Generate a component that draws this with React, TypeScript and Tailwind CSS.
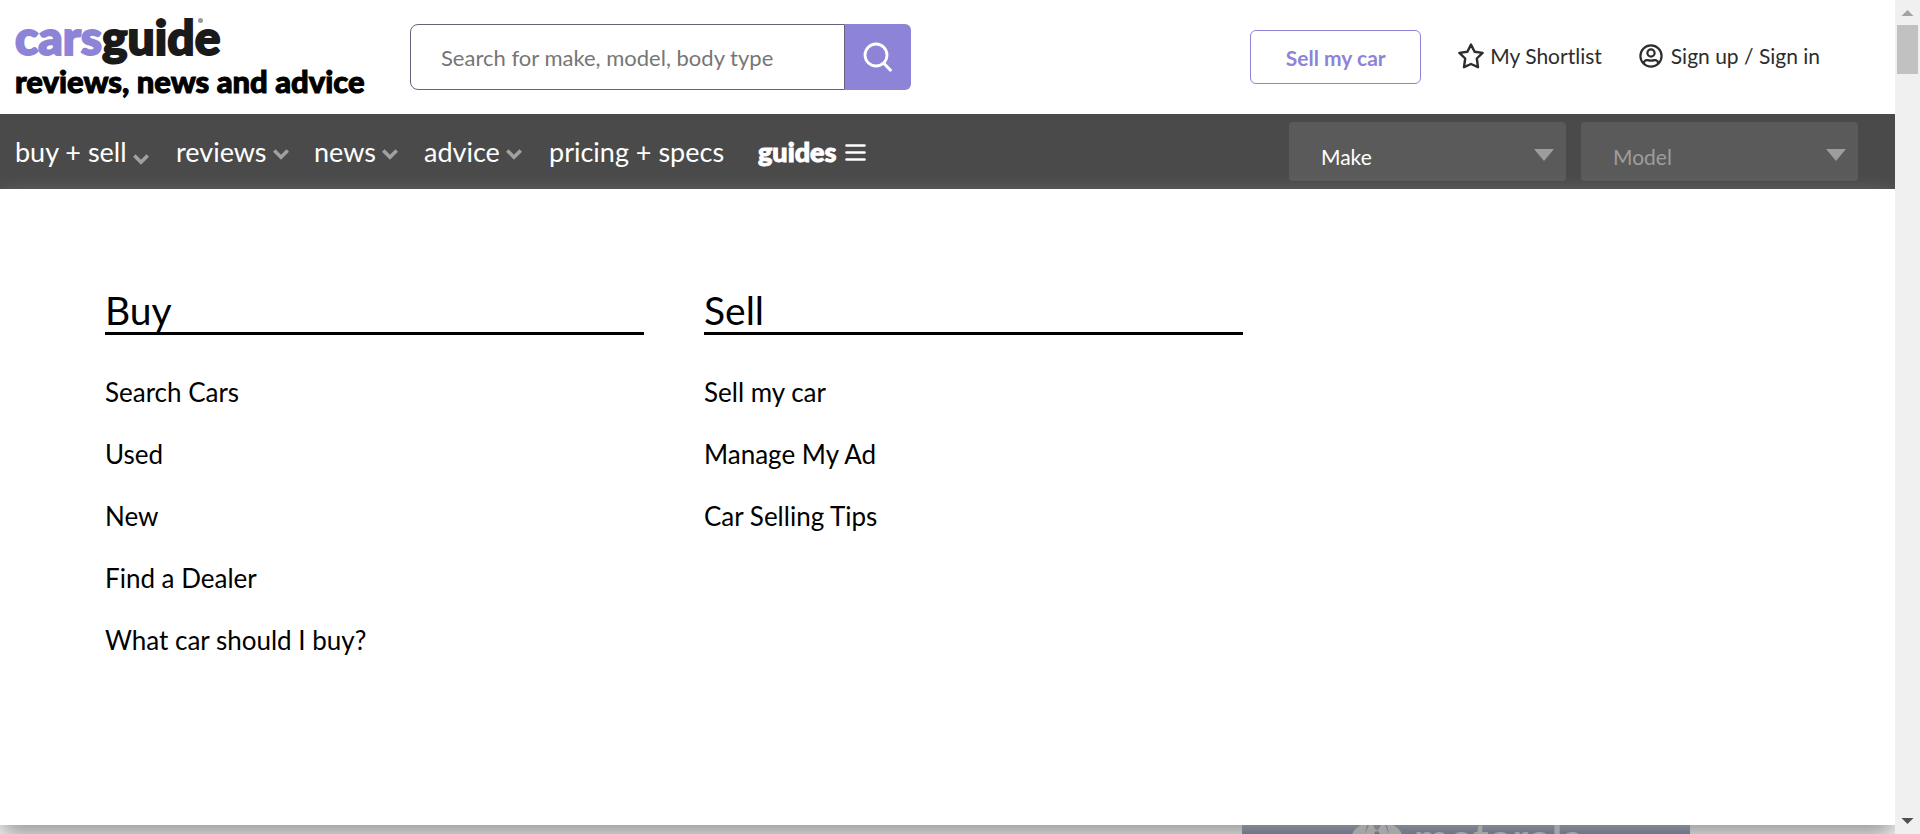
import React from "react";

const menuColumns = [
  {
    title: "Buy",
    links: ["Search Cars", "Used", "New", "Find a Dealer", "What car should I buy?"],
  },
  { title: "Sell", links: ["Sell my car", "Manage My Ad", "Car Selling Tips"] },
];

function Chevron() {
  return (
    <svg viewBox="0 0 16 11" className="h-[11px] w-4" fill="none" stroke="#a0a0a0" strokeWidth="3.6" aria-hidden="true">
      <path d="M1.3 1.5 8 8.2l6.7-6.7" />
    </svg>
  );
}

function Logo() {
  return (
    <a href="#" className="flex w-[395px] shrink-0 flex-col pt-2 pl-[15px]">
      <span className="flex text-[48px] leading-[58px] font-black text-[#1a1a1a] [-webkit-text-stroke:2px]">
        <span className="text-[#8d84d8]">cars</span>guide
        <span className="mt-[10px] -ml-[22px] size-[5px] rounded-full bg-[#9a9a9a]" />
      </span>
      <span className="text-[31px] leading-[30px] font-black whitespace-nowrap text-black [-webkit-text-stroke:1px]">
        reviews, news and advice
      </span>
    </a>
  );
}

function SearchForm() {
  return (
    <form className="mt-6 flex h-[66px] w-[501px] shrink-0" onSubmit={(e) => e.preventDefault()}>
      <input
        type="text"
        aria-label="Search"
        placeholder="Search for make, model, body type"
        className="min-w-0 flex-1 rounded-l-[8px] border border-[#66627a] pl-[30px] text-[22px] text-[#333] outline-none placeholder:text-[#767676]"
      />
      <button type="submit" aria-label="Search" className="flex w-[66px] items-center justify-center rounded-r-[6px] bg-[#8d84d8]">
        <svg viewBox="0 0 30 30" className="size-[30px]" fill="none" stroke="#fff" strokeWidth="2.8" aria-hidden="true">
          <circle cx="13" cy="13" r="11" />
          <path d="m20.5 21 7.8 8" strokeWidth="3" />
        </svg>
      </button>
    </form>
  );
}

function Header() {
  return (
    <header className="flex h-[114px] items-start bg-white pr-[75px]">
      <Logo />
      <div className="mr-6 ml-[15px]">
        <SearchForm />
      </div>
      <div className="ml-auto flex items-start text-[21px] whitespace-nowrap text-[#2d2d2d]">
        <a
          href="#"
          className="mt-[30px] mr-[37px] flex h-[54px] w-[171px] items-center justify-center rounded-[6px] border border-[#8d84d8] pt-[2px] font-bold text-[#8d84d8]"
        >
          Sell my car
        </a>
        <a href="#" className="mt-10 mr-[37px] flex h-8 items-center gap-[6px]">
          <svg viewBox="0 0 26 26" className="size-[26px]" fill="none" stroke="#2d2d2d" strokeWidth="2.4" strokeLinejoin="round" aria-hidden="true">
            <path d="m13 1.600 3.600 7.200 8 1.100-5.800 5.600 1.200 8.700-7-3.200-7 3.200 1.200-8.700-5.800-5.600 8-1.100z" />
          </svg>
          My Shortlist
        </a>
        <a href="#" className="mt-10 flex h-8 items-center gap-2">
          <svg viewBox="0 0 24 24" className="size-6" fill="none" stroke="#2d2d2d" strokeWidth="2.200" aria-hidden="true">
            <circle cx="12" cy="12" r="10.6" />
            <circle cx="12" cy="9" r="3.6" />
            <path d="M4.5 19c1-2.600 2.600-3.200 4-2.900 2.300.700 4.700.700 7 0 1.400-.300 3 .300 4 2.900" />
          </svg>
          Sign up / Sign in
        </a>
      </div>
    </header>
  );
}

function NavSelect({ label, disabled = false }: { label: string; disabled?: boolean }) {
  return (
    <div className="grid h-[59px] w-[277px] grid-cols-1">
      <select
        aria-label={label}
        disabled={disabled}
        className="col-start-1 row-start-1 appearance-none rounded-[4px] bg-[#5a5a5a] pt-[11px] pl-8 text-[21px] text-white opacity-100 disabled:text-[#9d9d9d]"
      >
        <option>{label}</option>
      </select>
      <svg
        viewBox="0 0 20 12"
        className="pointer-events-none col-start-1 row-start-1 mt-[27px] mr-3 h-3 w-5 justify-self-end"
        fill="#9d9d9d"
        aria-hidden="true"
      >
        <path d="M0 0h20L10 12z" />
      </svg>
    </div>
  );
}

function NavBar() {
  return (
    <nav className="flex h-[75px] items-start bg-[#4a4a4a] pt-2 pr-[37px] pl-[15px] text-white">
      <ul className="flex h-[61px] items-center text-[27px] whitespace-nowrap">
        <li className="w-[161px]">
          <button className="flex items-center gap-[6px]">
            buy + sell
            <span className="pt-[14px]"><Chevron /></span>
          </button>
        </li>
        <li className="w-[138px]">
          <button className="flex items-center gap-[6px]">
            reviews
            <span className="pt-1"><Chevron /></span>
          </button>
        </li>
        <li className="w-[110px]">
          <button className="flex items-center gap-[6px]">
            news
            <span className="pt-1"><Chevron /></span>
          </button>
        </li>
        <li className="w-[125px]">
          <button className="flex items-center gap-[6px]">
            advice
            <span className="pt-1"><Chevron /></span>
          </button>
        </li>
        <li className="w-[209px]">
          <a href="#">pricing + specs</a>
        </li>
        <li>
          <button className="flex items-center gap-2 font-black [-webkit-text-stroke:1px]">
            guides
            <svg viewBox="0 0 21 17" className="h-[17px] w-[21px]" stroke="#fff" strokeWidth="2.6" strokeLinecap="round" aria-hidden="true">
              <path d="M1.500 1.500h18M1.500 8.500h18M1.500 15.500h18" />
            </svg>
          </button>
        </li>
      </ul>
      <div className="ml-auto flex gap-[15px]">
        <NavSelect label="Make" />
        <NavSelect label="Model" disabled />
      </div>
    </nav>
  );
}

function MegaMenu() {
  return (
    <section className="relative grid flex-1 grid-cols-3 items-start gap-[60px] bg-white pt-[97px] pr-[53px] pl-[105px] text-black shadow-[0_12px_24px_#999]">
      {menuColumns.map((column) => (
        <div key={column.title}>
          <h2 className="border-b-[3px] border-black pt-[2px] text-[39px] leading-[44px]">{column.title}</h2>
          <ul className="mt-[26px] text-[26px] leading-[62px]">
            {column.links.map((link) => (
              <li key={link}>
                <a href="#">{link}</a>
              </li>
            ))}
          </ul>
        </div>
      ))}
    </section>
  );
}

function AdStrip() {
  return (
    <div className="flex h-[9px] shrink-0 justify-end pr-[205px]">
      <div className="relative flex h-[9px] w-[448px] items-start overflow-hidden bg-linear-to-b from-[#83878f] to-[#6f758a] pl-[110px] text-[#a5a5a5]">
        <svg viewBox="0 0 50 9" className="h-[9px] w-[50px] shrink-0" fill="#a5a5a5" aria-hidden="true">
          <path d="M0 9Q3 3 9 0h6l-2 9zM50 9Q47 3 41 0h-6l2 9zM13 9l4-9h4l4 7 4-7h4l4 9h-9l-3-5-3 5z" />
        </svg>
        <span className="-mt-2 ml-3 text-[42px] leading-[42px] font-bold">motorola</span>
      </div>
    </div>
  );
}

function ScrollTrack() {
  return (
    <div className="flex w-[25px] shrink-0 flex-col items-center bg-[#f0f0f0]" aria-hidden="true">
      <svg viewBox="0 0 25 25" className="size-[25px]" fill="#a3a3a3">
        <path d="M12.500 10 18.500 16h-12z" />
      </svg>
      <div className="h-[49px] w-[21px] bg-[#c1c1c1]" />
      <svg viewBox="0 0 25 25" className="mt-auto size-[25px]" fill="#505050">
        <path d="M6.500 9h12l-6 6z" />
      </svg>
    </div>
  );
}

export default function App() {
  return (
    <div className="flex h-screen overflow-hidden bg-white font-['Lato','Open_Sans',sans-serif]">
      <div className="flex min-w-0 flex-1 flex-col overflow-hidden">
        <Header />
        <NavBar />
        <MegaMenu />
        <AdStrip />
      </div>
      <ScrollTrack />
    </div>
  );
}
